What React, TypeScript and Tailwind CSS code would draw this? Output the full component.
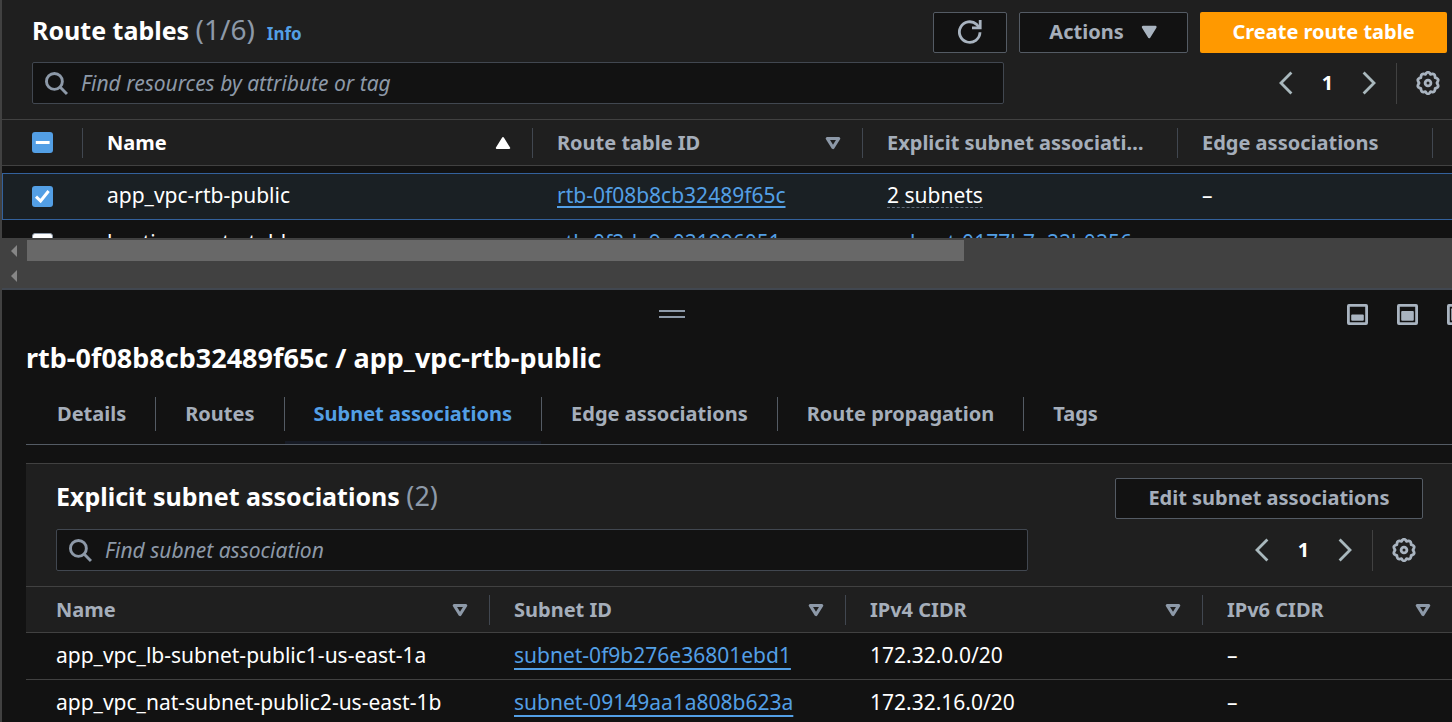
import type { ReactNode } from "react";

const routeTables = [
  { name: "app_vpc-rtb-public", id: "rtb-0f08b8cb32489f65c", subnets: "2 subnets", isLink: false, edge: "–", selected: true },
  { name: "hosting-route-table", id: "rtb-0f2da9a021996051", subnets: "subnet-0177b7e22b0256", isLink: true, edge: "", selected: false },
];

const subnets = [
  { name: "app_vpc_lb-subnet-public1-us-east-1a", id: "subnet-0f9b276e36801ebd1", ipv4: "172.32.0.0/20", ipv6: "–" },
  { name: "app_vpc_nat-subnet-public2-us-east-1b", id: "subnet-09149aa1a808b623a", ipv4: "172.32.16.0/20", ipv6: "–" },
];

const tabs = ["Details", "Routes", "Subnet associations", "Edge associations", "Route propagation", "Tags"];

function SearchIcon() {
  return (
    <svg className="shrink-0" width="23" height="23" viewBox="0 0 22 22" fill="none" stroke="#8d99a8" strokeWidth="2.8" aria-hidden="true">
      <circle cx="9" cy="9" r="7.6" />
      <path d="M14.4 14.4 21 21" />
    </svg>
  );
}

function RefreshIcon() {
  return (
    <svg width="24" height="24" viewBox="0 0 24 24" fill="none" stroke="#a9b4c0" strokeWidth="2.8" aria-hidden="true">
      <path d="M22 12.3A10.3 10.3 0 1 1 18.6 4.4L21 7.2" />
      <path d="M22.2 0v7.8H14" />
    </svg>
  );
}

function GearIcon() {
  const outline =
    "M10.3 2.2Q12 .2 13.7 2.2L14.6 3.4 16.1 3Q18.6 2.6 18.9 5.1L19.2 6.7 20.7 7.2Q22.9 8.3 21.8 10.4L21 12 21.8 13.6Q22.9 15.7 20.7 16.8L19.2 17.3 18.9 18.9Q18.6 21.4 16.1 21L14.6 20.6 13.7 21.8Q12 23.8 10.3 21.8L9.4 20.6 7.9 21Q5.4 21.4 5.1 18.9L4.8 17.3 3.3 16.8Q1.1 15.7 2.2 13.6L3 12 2.2 10.4Q1.1 8.3 3.3 7.2L4.8 6.7 5.1 5.1Q5.4 2.6 7.9 3L9.4 3.4Z";
  return (
    <svg width="24" height="24" viewBox="0 0 24 24" fill="none" stroke="#a9b4c0" strokeWidth="2.8" strokeLinejoin="round" aria-hidden="true">
      <path d={outline} />
      <circle cx="12" cy="12" r="2.9" />
    </svg>
  );
}

function Chevron({ right = false }: { right?: boolean }) {
  return (
    <svg width="14" height="24" viewBox="0 0 14 24" fill="none" stroke="#a9b8bd" strokeWidth="2.8" aria-hidden="true">
      <path d={right ? "M1.6 1.6 12 12 1.6 22.4" : "M12.4 1.6 2 12l10.4 10.4"} />
    </svg>
  );
}

function SortIcon({ active = false }: { active?: boolean }) {
  return (
    <svg className="shrink-0" width="16" height="14" viewBox="0 0 16 14" strokeLinejoin="round" aria-hidden="true">
      {active ? (
        <path d="M8 2 14.2 12H1.8Z" fill="#fff" stroke="#fff" strokeWidth="2" />
      ) : (
        <path d="M2.2 2.4h11.6L8 11.6Z" fill="none" stroke="#8d99a8" strokeWidth="3" />
      )}
    </svg>
  );
}

function PanelIcon({ top, height }: { top: number; height: number }) {
  return (
    <svg width="21" height="21" viewBox="0 0 21 21" aria-hidden="true">
      <rect x="1.4" y="1.4" width="18.2" height="18.2" rx="0.5" fill="none" stroke="#a9b4c0" strokeWidth="2.8" />
      <rect x="4.2" y={top} width="12.6" height={height} rx="1" fill="#a9b4c0" />
    </svg>
  );
}

function SearchBox({ label }: { label: string }) {
  return (
    <label className="flex h-[42px] min-w-0 max-w-[972px] flex-1 items-center gap-[13px] rounded-[2px] border border-[#414750] bg-[#121212] px-3">
      <SearchIcon />
      <span className="sr-only">{label}</span>
      <input
        type="text"
        placeholder={label}
        className="h-8 min-w-0 flex-1 bg-transparent text-[21px] text-white italic outline-none placeholder:text-[#8d99a8]"
      />
    </label>
  );
}

function Pager() {
  return (
    <div className="flex items-center">
      <button type="button" aria-label="Previous page"><Chevron /></button>
      <button type="button" className="w-[69px] text-center text-xl font-bold text-white">1</button>
      <button type="button" aria-label="Next page"><Chevron right /></button>
      <span className="mr-[19px] ml-5 h-[41px] w-px bg-[#414141]" />
      <button type="button" aria-label="Preferences"><GearIcon /></button>
    </div>
  );
}

function HeadCell({ children, sort, active = false, last = false, first = false }: { children: ReactNode; sort?: boolean; active?: boolean; last?: boolean; first?: boolean }) {
  return (
    <th scope="col" className="h-[46px] border-b border-[#414141] p-0 text-left text-xl font-bold">
      <div className={`flex h-[30px] items-center justify-between gap-2 pr-[21px] ${first ? "pl-[30px]" : "pl-6"} ${last ? "" : "border-r border-[#414750]"} ${active ? "text-white" : "text-[#a5aeba]"}`}>
        <span className="truncate">{children}</span>
        {sort && <button type="button" aria-label="Sort"><SortIcon active={active} /></button>}
      </div>
    </th>
  );
}

function ScrollArrow() {
  return (
    <svg width="6" height="12" viewBox="0 0 6 12" aria-hidden="true">
      <path d="M6 0v12L0 6Z" fill="#868686" />
    </svg>
  );
}

const outlineButton = "flex h-[41px] items-center justify-center rounded-[2px] border border-[#545b64] bg-[#121212] pb-0.5 font-bold text-[#a5aeba]";

function Tick({ state, label }: { state: "on" | "mixed" | "off"; label: string }) {
  return (
    <span className="relative ml-[30px] block size-[21px]">
      <input
        type="checkbox"
        aria-label={label}
        defaultChecked={state === "on"}
        className={`block size-[21px] appearance-none rounded-[3px] ${state === "off" ? "border border-[#8d99a8] bg-white" : "bg-[#539fe5]"}`}
      />
      {state !== "off" && (
        <svg className="pointer-events-none absolute inset-0" width="21" height="21" viewBox="0 0 21 21" fill="none" stroke="#fff" strokeWidth="3" aria-hidden="true">
          <path d={state === "on" ? "M4 10.6 8.6 15 16.6 5" : "M3.8 10.5h13.8"} />
        </svg>
      )}
    </span>
  );
}

export default function App() {
  return (
    <div className="flex h-screen flex-col overflow-hidden border-l-2 border-[#414141] bg-[#121212] font-['Noto_Sans',sans-serif] text-xl text-white">
      <section className="shrink-0 bg-[#1f1f1f]">
        <header className="flex items-start justify-between pt-3 pr-[5px] pl-[30px]">
          <div className="flex items-baseline gap-3">
            <h1 className="text-[25px] leading-[34px] font-bold">
              Route tables <span className="text-[28px] font-normal text-[#8d99a8]">(1/6)</span>
            </h1>
            <a href="#info" className="text-[17px] font-bold text-[#539fe5]">Info</a>
          </div>
          <div className="flex gap-3">
            <button type="button" aria-label="Refresh" className={`w-[74px] ${outlineButton}`}><RefreshIcon /></button>
            <button type="button" className={`w-[169px] gap-4 ${outlineButton}`}>
              Actions
              <svg width="18" height="14" viewBox="0 0 18 14" aria-hidden="true">
                <path d="M3 2h12.4L9.2 12Z" fill="#a9b4c0" stroke="#a9b4c0" strokeWidth="2.4" strokeLinejoin="round" />
              </svg>
            </button>
            <button type="button" className="h-[41px] w-[247px] rounded-[2px] bg-[#ff9900] pb-0.5 font-bold text-white">Create route table</button>
          </div>
        </header>
        <div className="flex items-center justify-between gap-6 pt-[9px] pr-3 pb-[15px] pl-[30px]">
          <SearchBox label="Find resources by attribute or tag" />
          <Pager />
        </div>
      </section>

      <div className="h-[119px] shrink-0 overflow-hidden border-t border-[#414141]">
        <table className="w-full table-fixed border-separate border-spacing-0 text-[21px]">
          <colgroup>
            <col className="w-[81px]" />
            <col className="w-[450px]" />
            <col className="w-[330px]" />
            <col className="w-[315px]" />
            <col className="w-[255px]" />
            <col />
          </colgroup>
          <thead className="bg-[#1f1f1f]">
            <tr>
              <th scope="col" className="h-[46px] border-b border-[#414141] p-0">
                <div className="flex h-[30px] items-center border-r border-[#414750]">
                  <Tick state="mixed" label="Select all route tables" />
                </div>
              </th>
              <HeadCell sort active>Name</HeadCell>
              <HeadCell sort>Route table ID</HeadCell>
              <HeadCell>Explicit subnet associations</HeadCell>
              <HeadCell>Edge associations</HeadCell>
              <th className="border-b border-[#414141] p-0" />
            </tr>
          </thead>
          <tbody>
            <tr aria-hidden="true"><td colSpan={6} className="h-[7px] p-0" /></tr>
            {routeTables.map((row) => {
              const cell = row.selected ? "h-[47px] border-y border-[#33619c] bg-[#1a2024] pt-0 pb-0.5 pr-0" : "h-[47px] pt-0 pb-0.5 pr-0";
              return (
                <tr key={row.name}>
                  <td className={`h-[47px] p-0 ${row.selected ? "border-y border-l border-[#33619c] bg-[#1a2024]" : ""}`}>
                    <div className={row.selected ? "-ml-px" : ""}>
                      <Tick state={row.selected ? "on" : "off"} label={`Select ${row.name}`} />
                    </div>
                  </td>
                  <td className={`${cell} pl-6`}>{row.name}</td>
                  <td className={`${cell} pl-6`}>
                    <a href={`#${row.id}`} className="text-[#539fe5] underline decoration-2 underline-offset-3">{row.id}</a>
                  </td>
                  <td className={`${cell} pl-6`}>
                    {row.isLink ? (
                      <a href="#subnet" className="text-[#539fe5] underline decoration-2 underline-offset-3">{row.subnets}</a>
                    ) : (
                      <button type="button" className="border-b border-dashed border-[#5f6b7a] leading-6">{row.subnets}</button>
                    )}
                  </td>
                  <td className={`${cell} pl-6`}>{row.edge}</td>
                  <td className={cell} />
                </tr>
              );
            })}
          </tbody>
        </table>
      </div>

      <div className="shrink-0 border-b-2 border-[#414750] bg-[#414141]" aria-hidden="true">
        <div className="flex h-[25px] items-center gap-[10px] pl-[9px]">
          <ScrollArrow />
          <div className="h-[21px] w-[65%] bg-[#686868]" />
        </div>
        <div className="flex h-[25px] items-center pl-[9px]"><ScrollArrow /></div>
      </div>

      <section className="min-h-0 flex-1 overflow-hidden">
        <div className="grid h-12 grid-cols-[1fr_auto_1fr] items-center">
          <span />
          <button type="button" aria-label="Resize panel" className="mr-[110px] flex w-[26px] flex-col gap-1">
            <span className="h-0.5 bg-[#8d99a8]" />
            <span className="h-0.5 bg-[#8d99a8]" />
          </button>
          <div className="flex w-[105px] gap-[29px] justify-self-end overflow-hidden">
            <button type="button" aria-label="Small panel" className="shrink-0"><PanelIcon top={10.5} height={6.3} /></button>
            <button type="button" aria-label="Medium panel" className="shrink-0"><PanelIcon top={7} height={9.8} /></button>
            <button type="button" aria-label="Full panel" className="shrink-0"><PanelIcon top={4.2} height={12.6} /></button>
          </div>
        </div>

        <div className="pl-6">
          <h2 className="pt-0.5 text-[27px] leading-9 font-bold">rtb-0f08b8cb32489f65c / app_vpc-rtb-public</h2>
          <nav className="mt-[11px] flex h-[58px] items-start border-b border-[#545b64] pt-[10px]">
            {tabs.map((tab) => (
              <a
                key={tab}
                href={`#${tab}`}
                className={`relative flex h-[34px] items-center border-r border-[#545b64] px-[29px] font-bold whitespace-nowrap first:pl-[31px] last:border-r-0 ${
                  tab === "Subnet associations"
                    ? "text-[#539fe5] after:absolute after:inset-x-0 after:-bottom-[13px] after:h-[3px] after:bg-[#161a24]"
                    : "text-[#a5aeba]"
                }`}
              >
                {tab}
              </a>
            ))}
          </nav>

          <div className="mt-[18px] border-t border-[#414141] bg-[#1f1f1f]">
            <div className="flex items-start justify-between pt-[14px] pr-[29px] pl-[30px]">
              <h3 className="text-[25px] leading-9 font-bold">
                Explicit subnet associations <span className="text-[27px] font-normal text-[#8d99a8]">(2)</span>
              </h3>
              <button type="button" className={`w-[308px] ${outlineButton}`}>Edit subnet associations</button>
            </div>
            <div className="flex items-center justify-between gap-6 pt-[10px] pr-9 pb-[15px] pl-[30px]">
              <SearchBox label="Find subnet association" />
              <Pager />
            </div>
            <table className="w-full table-fixed border-separate border-spacing-0 border-t border-[#414141] text-[21px]">
              <colgroup>
                <col className="w-[464px]" />
                <col className="w-[356px]" />
                <col className="w-[357px]" />
                <col />
              </colgroup>
              <thead>
                <tr>
                  <HeadCell sort first>Name</HeadCell>
                  <HeadCell sort>Subnet ID</HeadCell>
                  <HeadCell sort>IPv4 CIDR</HeadCell>
                  <HeadCell sort last>IPv6 CIDR</HeadCell>
                </tr>
              </thead>
              <tbody className="bg-[#121212]">
                {subnets.map((row) => (
                  <tr key={row.id}>
                    <td className="h-[47px] border-b border-[#414141] py-0 pr-0 pl-[30px]">{row.name}</td>
                    <td className="h-[47px] border-b border-[#414141] py-0 pr-0 pl-6">
                      <a href={`#${row.id}`} className="text-[#539fe5] underline decoration-2 underline-offset-5">{row.id}</a>
                    </td>
                    <td className="h-[47px] border-b border-[#414141] py-0 pr-0 pl-6">{row.ipv4}</td>
                    <td className="h-[47px] border-b border-[#414141] py-0 pr-0 pl-6">{row.ipv6}</td>
                  </tr>
                ))}
              </tbody>
            </table>
          </div>
        </div>
      </section>
    </div>
  );
}
